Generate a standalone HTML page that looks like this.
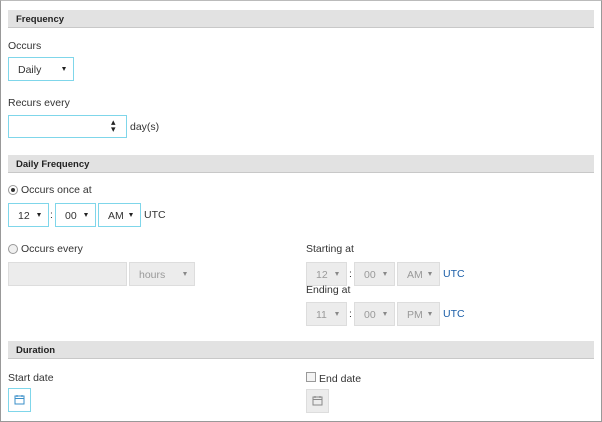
<!DOCTYPE html>
<html><head><style>
*{box-sizing:border-box;margin:0;padding:0}
body{width:602px;height:422px;background:#fff;font-family:"Liberation Sans",sans-serif;font-size:10.5px;color:#333;position:relative;overflow:hidden}
.frame{position:absolute;left:0;top:0;width:602px;height:422px;border:1px solid #999;border-top-color:#bbb}
.a{position:absolute}
.hdr{position:absolute;left:8px;width:586px;height:18px;background:#e2e2e2;border-bottom:1px solid #c8c8c8;font-weight:bold;font-size:9.5px;padding:4px 8px;color:#222}
.sel{position:absolute;height:24px;border:1px solid #7fd6ea;background:#fff;font-size:10.5px;padding:6px 0 0 9px}
.sel:after{content:"";position:absolute;right:7px;top:9px;border-left:2.5px solid transparent;border-right:2.5px solid transparent;border-top:4px solid #222}
.dis{background:#ececec;border:1px solid #ddd;color:#999}
.dis:after{border-top-color:#888}
.rad{position:absolute;width:10px;height:10px;border-radius:50%;border:1px solid #999;background:#f0f0f0}
.blue{color:#1a5ea8}
</style></head><body>
<div class="frame"></div>
<div class="hdr" style="top:10px">Frequency</div>
<div class="a" style="left:8px;top:40px">Occurs</div>
<div class="sel" style="left:8px;top:57px;width:66px">Daily</div>
<div class="a" style="left:8px;top:97px">Recurs every</div>
<div class="a" style="left:8px;top:115px;width:119px;height:23px;border:1px solid #7fd6ea"></div>
<div class="a" style="left:111px;top:119px;font-size:9px;line-height:7px;color:#222">▴<br>▾</div>
<div class="a" style="left:130px;top:121px">day(s)</div>
<div class="hdr" style="top:155px">Daily Frequency</div>
<div class="rad" style="left:8px;top:185px;background:#fff"><div style="position:absolute;left:2px;top:2px;width:4px;height:4px;border-radius:50%;background:#333"></div></div>
<div class="a" style="left:21px;top:184px">Occurs once at</div>
<div class="sel" style="left:8px;top:203px;width:41px">12</div>
<div class="a" style="left:50px;top:209px">:</div>
<div class="sel" style="left:55px;top:203px;width:41px">00</div>
<div class="sel" style="left:98px;top:203px;width:43px">AM</div>
<div class="a" style="left:144px;top:209px">UTC</div>
<div class="rad" style="left:8px;top:244px"></div>
<div class="a" style="left:21px;top:243px">Occurs every</div>
<div class="a dis" style="left:8px;top:262px;width:119px;height:24px"></div>
<div class="sel dis" style="left:129px;top:262px;width:66px">hours</div>
<div class="a" style="left:306px;top:243px">Starting at</div>
<div class="sel dis" style="left:306px;top:262px;width:41px">12</div>
<div class="a" style="left:349px;top:268px">:</div>
<div class="sel dis" style="left:354px;top:262px;width:41px">00</div>
<div class="sel dis" style="left:397px;top:262px;width:43px">AM</div>
<div class="a blue" style="left:443px;top:268px">UTC</div>
<div class="a" style="left:306px;top:284px">Ending at</div>
<div class="sel dis" style="left:306px;top:302px;width:41px">11</div>
<div class="a" style="left:349px;top:308px">:</div>
<div class="sel dis" style="left:354px;top:302px;width:41px">00</div>
<div class="sel dis" style="left:397px;top:302px;width:43px">PM</div>
<div class="a blue" style="left:443px;top:308px">UTC</div>
<div class="hdr" style="top:341px">Duration</div>
<div class="a" style="left:8px;top:372px">Start date</div>
<div class="a" style="left:8px;top:388px;width:23px;height:24px;border:1px solid #7fd6ea"><svg width="21" height="22" viewBox="0 0 21 22"><rect x="6" y="7" width="9" height="8" fill="none" stroke="#3a8fc8"/><line x1="6" y1="9.5" x2="15" y2="9.5" stroke="#3a8fc8"/><line x1="8" y1="6" x2="8" y2="8" stroke="#3a8fc8"/><line x1="13" y1="6" x2="13" y2="8" stroke="#3a8fc8"/></svg></div>
<div class="a" style="left:306px;top:372px;width:10px;height:10px;border:1px solid #999;background:#f3f3f3"></div>
<div class="a" style="left:319px;top:373px">End date</div>
<div class="a dis" style="left:306px;top:389px;width:23px;height:24px"><svg width="21" height="22" viewBox="0 0 21 22"><rect x="6" y="7" width="9" height="8" fill="none" stroke="#888"/><line x1="6" y1="9.5" x2="15" y2="9.5" stroke="#888"/><line x1="8" y1="6" x2="8" y2="8" stroke="#888"/><line x1="13" y1="6" x2="13" y2="8" stroke="#888"/></svg></div>
</body></html>
